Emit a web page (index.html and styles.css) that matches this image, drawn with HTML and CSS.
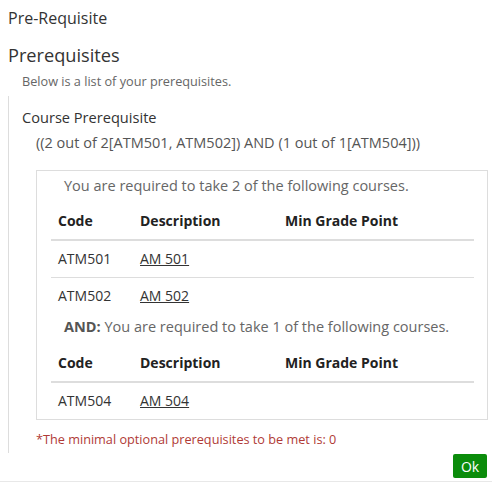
FILE: index.html
```html
<!DOCTYPE html>
<html lang="en">
<head>
<meta charset="UTF-8" />
<meta name="viewport" content="width=device-width, initial-scale=1" />
<title>Pre-Requisite</title>
<link rel="stylesheet" href="styles.css">
</head>
<body>

<div class="modal">
  <div class="modal-title">Pre-Requisite</div>

  <h2>Prerequisites</h2>
  <p class="lead">Below is a list of your prerequisites.</p>

  <div class="section">
    <h3>Course Prerequisite</h3>
    <p class="expr">((2 out of 2[ATM501, ATM502]) AND (1 out of 1[ATM504]))</p>

    <div class="req-box">
      <p class="req first">You are required to take 2 of the following courses.</p>
      <table>
        <thead>
          <tr><th class="col-code">Code</th><th class="col-desc">Description</th><th>Min Grade Point</th></tr>
        </thead>
        <tbody>
          <tr><td>ATM501</td><td><a href="#">AM 501</a></td><td></td></tr>
          <tr><td>ATM502</td><td><a href="#">AM 502</a></td><td></td></tr>
        </tbody>
      </table>

      <p class="req"><b>AND:</b> You are required to take 1 of the following courses.</p>
      <table>
        <thead>
          <tr><th class="col-code">Code</th><th class="col-desc">Description</th><th>Min Grade Point</th></tr>
        </thead>
        <tbody>
          <tr><td>ATM504</td><td><a href="#">AM 504</a></td><td></td></tr>
        </tbody>
      </table>
    </div>

    <p class="note">*The minimal optional prerequisites to be met is: 0</p>
  </div>

  <div class="footer">
    <button type="button">Ok</button>
  </div>
</div>

</body>
</html>
```

FILE: styles.css
```css
body {
  font-family: 'Open Sans', 'Noto Sans', Arial, sans-serif;
  margin: 0;
  background: #fff;
  color: #333;
}
.modal {
  width: 492px;
}
.modal-title {
  font-size: 16px;
  line-height: 22px;
  padding: 7px 8px 0;
  color: #333;
}
h2 {
  font-size: 18.2px;
  font-weight: 400;
  line-height: 28px;
  margin: 12px 0 0 8px;
  color: #333;
}
.lead {
  font-size: 12.7px;
  line-height: 18px;
  margin: 3px 0 6px 22px;
  color: #666;
}
.section {
  margin-left: 8px;
  border-left: 1px solid #ddd;
  padding: 10px 0 5px 13px;
}
h3 {
  font-size: 14.6px;
  font-weight: 400;
  line-height: 22px;
  margin: 0;
  color: #333;
}
.expr {
  font-size: 14.5px;
  line-height: 20px;
  margin: 5px 0 0 14px;
  color: #555;
}
.req-box {
  margin: 17px 4px 0 14px;
  border: 1px solid #ddd;
}
.req {
  font-size: 14.5px;
  line-height: 20px;
  margin: 3px 0 8px 27px;
  color: #666;
}
.req.first {
  margin-top: 5px;
  margin-bottom: 7px;
}
.req b {
  color: #555;
}
table {
  width: calc(100% - 27px);
  margin: 0 13px 0 14px;
  border-collapse: collapse;
  font-size: 14px;
}
th, td {
  text-align: left;
  padding: 8px 7px;
  line-height: 20px;
}
th {
  font-weight: 700;
  color: #222;
  border-bottom: 2px solid #ddd;
}
.col-code {
  width: 68px;
}
.col-desc {
  width: 131px;
}
td {
  color: #333;
}
tbody tr + tr td {
  border-top: 1px solid #ddd;
}
td a {
  color: #333;
}
.note {
  font-size: 12.7px;
  line-height: 18px;
  margin: 10px 0 0 14px;
  color: #b03a36;
}
.footer {
  text-align: right;
  padding: 1px 5px 3px;
  border-bottom: 1px solid #e8e8e8;
}
button {
  font-family: inherit;
  font-size: 14px;
  font-weight: 500;
  height: 24px;
  width: 34px;
  padding: 0;
  border: none;
  border-radius: 2px;
  background: #0b8c0b;
  color: #fff;
  cursor: pointer;
}
```
